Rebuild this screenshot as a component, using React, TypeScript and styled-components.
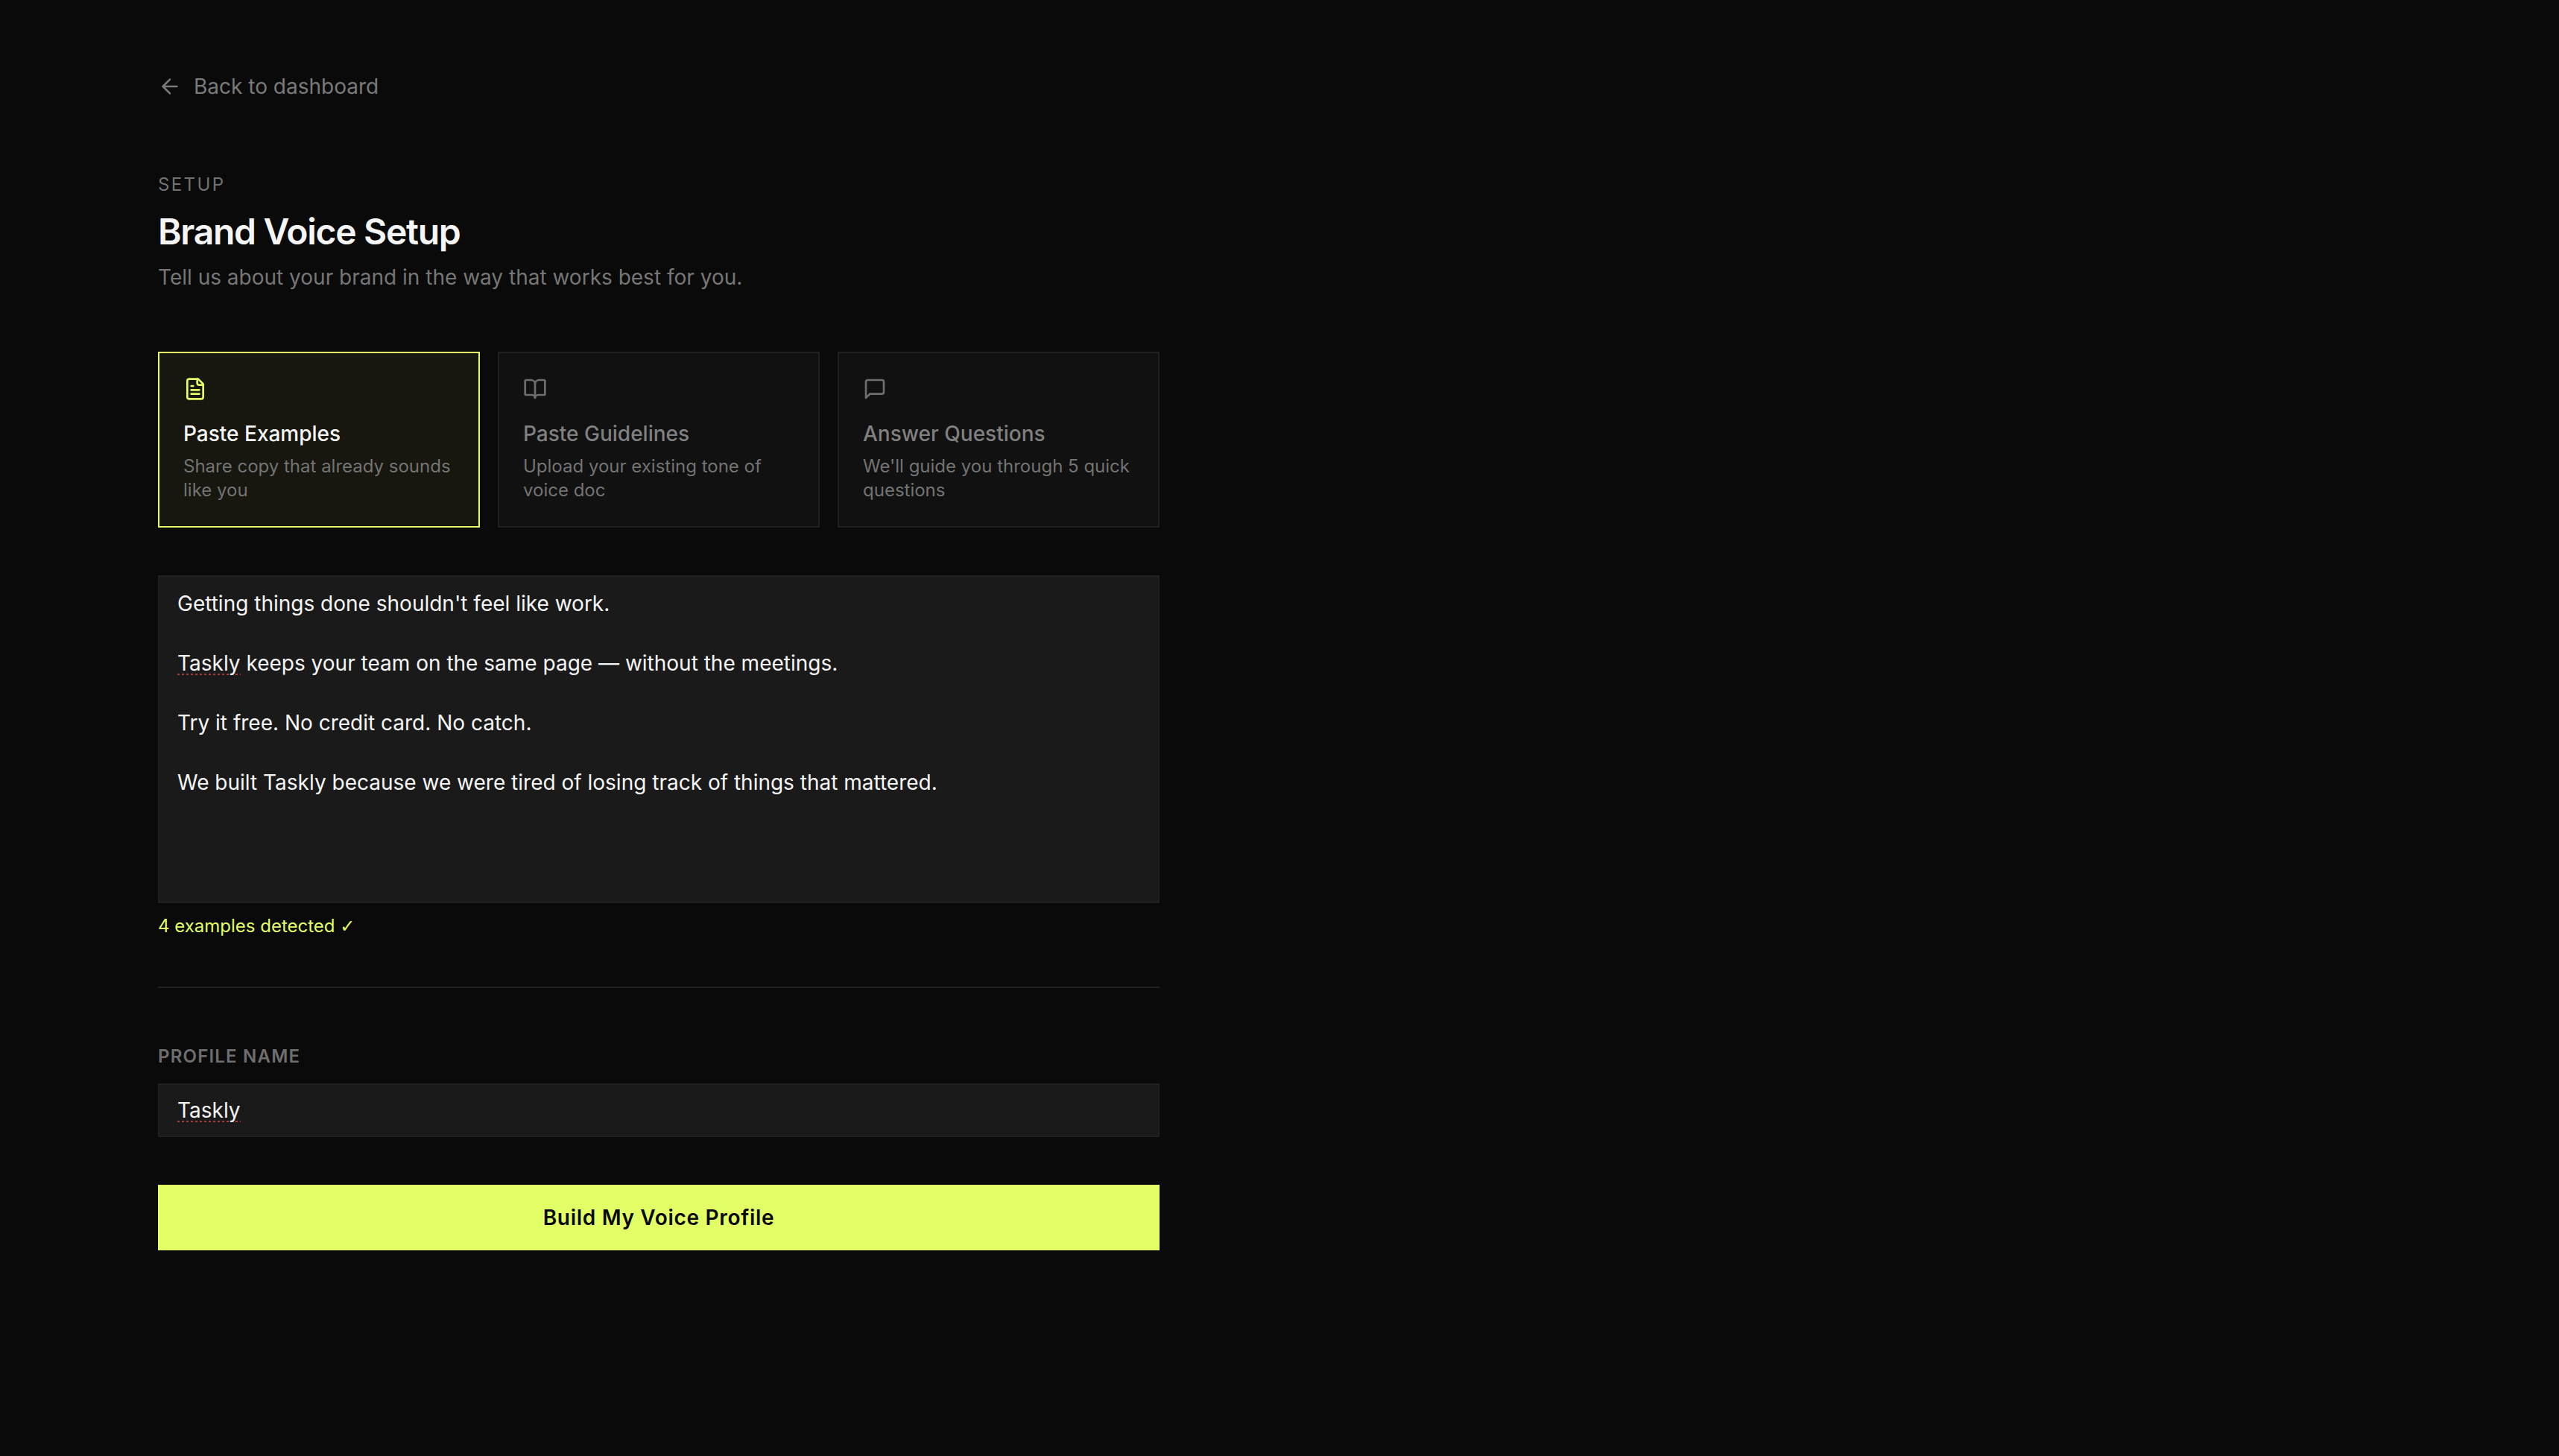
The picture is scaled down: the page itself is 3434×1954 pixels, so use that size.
import { ArrowLeft, BookOpen } from 'lucide-react';
import styled, { createGlobalStyle } from 'styled-components';

const GlobalStyle = createGlobalStyle`
  html, body {
    margin: 0;
    padding: 0;
    background-color: #0a0a0a;
  }

  body {
    font-family: Inter, "Liberation Sans", sans-serif;
    -webkit-font-smoothing: antialiased;
  }

  * {
    box-sizing: border-box;
  }
`;

const Page = styled.div`
  min-height: 1954px;
  padding: 96px 212px;
`;

const Column = styled.main`
  display: flex;
  flex-direction: column;
  width: 1344px;
`;

const BackLink = styled.a`
  display: flex;
  align-items: center;
  gap: 16px;
  margin-bottom: 96px;
  font-size: 28px;
  line-height: 40px;
  color: #7a7a7a;
  cursor: pointer;
`;

const Eyebrow = styled.div`
  font-size: 24px;
  line-height: 32px;
  letter-spacing: 0.1em;
  color: #727272;
  margin-bottom: 19px;
`;

const Title = styled.h1`
  margin: 0 0 13px;
  font-size: 48px;
  line-height: 56px;
  font-weight: 600;
  letter-spacing: -1.3px;
  color: #f5f5f5;
`;

const Subtitle = styled.p`
  margin: 0 0 80px;
  font-size: 28px;
  line-height: 40px;
  color: #767676;
`;

const CardRow = styled.div`
  display: grid;
  grid-template-columns: repeat(3, 1fr);
  gap: 24px;
  margin-bottom: 64px;
`;

const Card = styled.div<{ $active?: boolean }>`
  height: 236px;
  padding: 32px;
  border: 2px solid ${(p) => (p.$active ? '#e2ff66' : '#202020')};
  background-color: ${(p) => (p.$active ? '#17170f' : '#111')};
  color: ${(p) => (p.$active ? '#e2ff66' : '#6e6e6e')};
  cursor: pointer;

  svg {
    display: block;
  }
`;

const CardTitle = styled.div<{ $active?: boolean }>`
  margin-top: 26px;
  font-size: 28px;
  line-height: 36px;
  font-weight: 500;
  color: ${(p) => (p.$active ? '#f5f5f5' : '#808080')};
`;

const CardText = styled.div`
  margin-top: 10px;
  font-size: 24px;
  line-height: 32px;
  color: #737373;
`;

const Examples = styled.div`
  height: 440px;
  padding: 16px 24px;
  border: 2px solid #202020;
  background-color: #1a1a1a;
  font-size: 28px;
  line-height: 40px;
  color: #f5f5f5;
  white-space: pre-wrap;
`;

/* browser spellcheck squiggle: 6px dot period, sits just under the baseline */
const Misspelled = styled.span`
  background-image: repeating-linear-gradient(90deg, #a83c3c 0 3px, transparent 3px 6px);
  background-repeat: no-repeat;
  background-size: 100% 2px;
  background-position: 0 calc(100% - 1px);
`;

const Detected = styled.div`
  margin-top: 15px;
  font-size: 24px;
  line-height: 32px;
  color: #e2ff66;
`;

const CheckMark = styled.span`
  font-family: "DejaVu Sans", sans-serif;
`;

const Divider = styled.hr`
  width: 100%;
  height: 2px;
  margin: 65px 0 75px;
  border: 0;
  background-color: #222;
`;

const FieldLabel = styled.div`
  margin-top: 1px;
  margin-bottom: 20px;
  font-size: 24px;
  line-height: 32px;
  font-weight: 600;
  letter-spacing: 0.05em;
  color: #6e6e6e;
`;

const NameField = styled.div`
  display: flex;
  align-items: center;
  height: 72px;
  padding: 0 24px;
  border: 2px solid #202020;
  background-color: #1a1a1a;
  font-size: 28px;
  color: #f5f5f5;
`;

const SubmitButton = styled.button`
  height: 88px;
  margin-top: 64px;
  border: 0;
  background-color: #e2ff66;
  color: #0a0a0a;
  font-family: inherit;
  font-size: 28px;
  font-weight: 600;
  letter-spacing: 0.025em;
  cursor: pointer;
`;

const DocIcon = () => (
  <svg width={32} height={32} viewBox="0 0 24 24" fill="none" stroke="currentColor" strokeWidth={2} strokeLinecap="round" strokeLinejoin="round">
    <path d="M15 2H6a2 2 0 0 0-2 2v16a2 2 0 0 0 2 2h12a2 2 0 0 0 2-2V7Z" />
    <path d="M14 2v4a2 2 0 0 0 2 2h4" />
    <path d="M10 9H8" />
    <path d="M16 13H8" />
    <path d="M16 17H8" />
  </svg>
);

const BubbleIcon = () => (
  <svg width={32} height={32} viewBox="0 0 24 24" fill="none" stroke="currentColor" strokeWidth={2} strokeLinecap="round" strokeLinejoin="round">
    <path d="M21 15a2 2 0 0 1-2 2H7l-4 4V5a2 2 0 0 1 2-2h14a2 2 0 0 1 2 2z" />
  </svg>
);

const modes = [
  {
    icon: <DocIcon />,
    title: 'Paste Examples',
    text: 'Share copy that already sounds like you',
    active: true,
  },
  {
    icon: <BookOpen size={32} strokeWidth={2} />,
    title: 'Paste Guidelines',
    text: 'Upload your existing tone of voice doc',
    active: false,
  },
  {
    icon: <BubbleIcon />,
    title: 'Answer Questions',
    text: "We'll guide you through 5 quick questions",
    active: false,
  },
];

const App: React.FC = () => {
  return (
    <Page>
      <GlobalStyle />
      <Column>
        <BackLink>
          <ArrowLeft size={32} strokeWidth={2} />
          Back to dashboard
        </BackLink>
        <Eyebrow>SETUP</Eyebrow>
        <Title>Brand Voice Setup</Title>
        <Subtitle>Tell us about your brand in the way that works best for you.</Subtitle>

        <CardRow>
          {modes.map(({ icon, title, text, active }) => (
            <Card key={title} $active={active}>
              {icon}
              <CardTitle $active={active}>{title}</CardTitle>
              <CardText>{text}</CardText>
            </Card>
          ))}
        </CardRow>

        <Examples>
          {"Getting things done shouldn't feel like work.\n\n"}
          <Misspelled>Taskly</Misspelled>
          {' keeps your team on the same page — without the meetings.\n\n'}
          {'Try it free. No credit card. No catch.\n\n'}
          {'We built Taskly because we were tired of losing track of things that mattered.'}
        </Examples>
        <Detected>
          4 examples detected <CheckMark>✓</CheckMark>
        </Detected>

        <Divider />

        <FieldLabel>PROFILE NAME</FieldLabel>
        <NameField>
          <Misspelled>Taskly</Misspelled>
        </NameField>
        <SubmitButton>Build My Voice Profile</SubmitButton>
      </Column>
    </Page>
  );
};

export default App;
